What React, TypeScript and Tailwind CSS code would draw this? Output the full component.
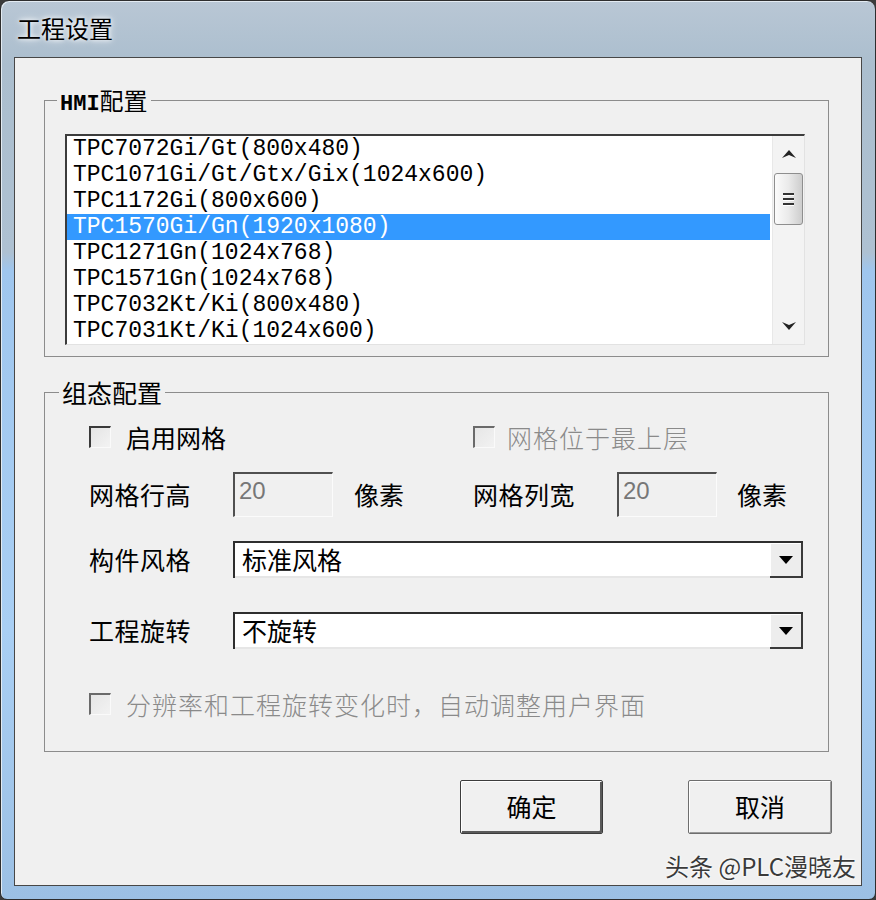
import React from "react";

const items = [
  "TPC7072Gi/Gt(800x480)",
  "TPC1071Gi/Gt/Gtx/Gix(1024x600)",
  "TPC1172Gi(800x600)",
  "TPC1570Gi/Gn(1920x1080)",
  "TPC1271Gn(1024x768)",
  "TPC1571Gn(1024x768)",
  "TPC7032Kt/Ki(800x480)",
  "TPC7031Kt/Ki(1024x600)",
];

function CheckBox({ disabled }: { disabled?: boolean }) {
  return (
    <div
      className={
        disabled
          ? "w-[22px] h-[22px] shrink-0 border-t-2 border-l-2 border-t-[#6a6a6a] border-l-[#6a6a6a] border-b border-r border-b-[#fafafa] border-r-[#fafafa] bg-[linear-gradient(135deg,#e6e6e6,#f2f2f2)]"
          : "w-[22px] h-[22px] shrink-0 border-t-2 border-l-2 border-t-[#3a3a3a] border-l-[#3a3a3a] border-b border-r border-b-[#fafafa] border-r-[#fafafa] bg-[linear-gradient(135deg,#e4e4e4,#f3f3f3)]"
      }
    />
  );
}

function NumBox() {
  return (
    <div className="w-[100px] h-[45px] shrink-0 border-t-2 border-l-2 border-t-[#505050] border-l-[#505050] border-b border-r border-b-[#fbfbfb] border-r-[#fbfbfb] bg-[#f0f0f0] pl-[4px] pt-[2px] [font-family:'Liberation_Sans',sans-serif] text-[24px] leading-[30px] text-[#777]">
      20
    </div>
  );
}

function Combo({ text }: { text: string }) {
  return (
    <div className="w-[570px] h-[37px] flex border-t-2 border-l-2 border-t-[#2e2e2e] border-l-[#2e2e2e] bg-white">
      <div className="flex-1 border-b-2 border-b-[#e6e6e6] pl-[7px] text-[25px] leading-[33px] text-black">
        {text}
      </div>
      <div className="w-[33px] flex items-center justify-center bg-[#ededed] border-r-2 border-b-2 border-r-[#3a3a3a] border-b-[#3a3a3a] shadow-[inset_1px_1px_0_#fff]">
        <svg width="16" height="10" viewBox="0 0 16 10">
          <polygon points="1,1 15,1 8,9" fill="#000" />
        </svg>
      </div>
    </div>
  );
}

export default function App() {
  return (
    <div className="w-[876px] h-[900px] bg-[#3b3b3b] [font-family:'Noto_Sans_CJK_SC','Noto_Sans',sans-serif]">
      <div className="flex h-full flex-col rounded-t-[9px] rounded-b-[7px] border border-[#2e2e2e] bg-[linear-gradient(180deg,#b9c7d5_0%,#abbece_7%,#aec1d2_28%,#9fc6ee_30%,#a9cff4_70%,#9cc0e4_100%)] shadow-[inset_1px_1px_0_#e3ebf2]">
        <div className="h-[56px] flex items-center pl-[16px] pb-[2px] text-[24px] text-black [text-shadow:0_0_8px_#fff,0_0_4px_#fff]">
          工程设置
        </div>
        <div className="relative mx-[13px] mb-[13px] flex-1 flex flex-col border border-[#474747] bg-[#f0f0f0]">
          {/* HMI group */}
          <fieldset className="ml-[29px] mr-[32px] mt-[28px] border border-[#8c8c8c]">
            <legend className="ml-[12px] px-[3px] h-[28px] text-[24px] leading-[28px] text-black">
              <span className="[font-family:'Liberation_Mono',monospace] font-bold text-[22px]">HMI</span>配置
            </legend>
            <div className="pt-[20px] pl-[20px] pr-[23px] pb-[11px]">
              <div className="h-[211px] flex border-t-2 border-l-2 border-t-[#3c3c3c] border-l-[#3c3c3c] border-b border-r border-b-[#e2e2e2] border-r-[#e2e2e2] bg-white">
                <div className="flex-1 pr-[2px] [font-family:'Liberation_Mono',monospace] text-[23px]">
                  {items.map((t, i) => (
                    <div
                      key={t}
                      className={
                        i === 3
                          ? "h-[26px] leading-[26px] pl-[6px] bg-[#3399ff] text-white whitespace-nowrap"
                          : "h-[26px] leading-[26px] pl-[6px] text-black whitespace-nowrap"
                      }
                    >
                      {t}
                    </div>
                  ))}
                </div>
                <div className="w-[32px] flex flex-col items-center bg-[#f3f3f3] border-l border-l-[#e8e8e8]">
                  <div className="h-[36px] w-full flex items-center justify-center">
                    <svg width="14" height="8" viewBox="0 0 14 8">
                      <polygon points="0,8 7,0 14,8 7,5" fill="#222" />
                    </svg>
                  </div>
                  <div className="mt-[1px] w-[29px] h-[52px] rounded-[3px] border border-[#8e8e8e] bg-[linear-gradient(90deg,#fbfbfb_0%,#eaeaea_50%,#cdcdcd_100%)] flex flex-col items-center justify-center gap-[3px]">
                    <div className="w-[11px] h-[2px] bg-[#333] shadow-[0_1px_0_#fff]" />
                    <div className="w-[11px] h-[2px] bg-[#333] shadow-[0_1px_0_#fff]" />
                    <div className="w-[11px] h-[2px] bg-[#333] shadow-[0_1px_0_#fff]" />
                  </div>
                  <div className="flex-1" />
                  <div className="h-[36px] w-full flex items-center justify-center">
                    <svg width="14" height="8" viewBox="0 0 14 8">
                      <polygon points="0,0 7,8 14,0 7,3" fill="#222" />
                    </svg>
                  </div>
                </div>
              </div>
            </div>
          </fieldset>

          {/* Config group */}
          <fieldset className="ml-[29px] mr-[32px] mt-[21px] border border-[#8c8c8c]">
            <legend className="ml-[14px] px-[3px] h-[28px] text-[25px] leading-[28px] text-black">组态配置</legend>
            <div className="pt-[16px] pl-[44px] pb-[32px] text-[25px] text-black">
              <div className="h-[30px] flex items-center">
                <div className="w-[384px] flex items-center gap-[15px]">
                  <CheckBox />
                  <span className="leading-[30px]">启用网格</span>
                </div>
                <div className="flex items-center gap-[12px]">
                  <CheckBox disabled />
                  <span className="leading-[30px] text-[#8a8a8a] font-light tracking-[1px]">网格位于最上层</span>
                </div>
              </div>

              <div className="mt-[20px] h-[45px] flex items-center">
                <div className="w-[384px] flex items-center">
                  <span className="w-[144px] tracking-[0.5px]">网格行高</span>
                  <NumBox />
                  <span className="ml-[21px]">像素</span>
                </div>
                <div className="flex items-center">
                  <span className="w-[144px] tracking-[0.5px]">网格列宽</span>
                  <NumBox />
                  <span className="ml-[20px]">像素</span>
                </div>
              </div>

              <div className="mt-[24px] h-[37px] flex items-center">
                <span className="w-[144px] tracking-[0.5px]">构件风格</span>
                <Combo text="标准风格" />
              </div>

              <div className="mt-[34px] h-[37px] flex items-center">
                <span className="w-[144px] tracking-[0.5px]">工程旋转</span>
                <Combo text="不旋转" />
              </div>

              <div className="mt-[40px] h-[30px] flex items-center gap-[15px]">
                <CheckBox disabled />
                <span className="leading-[30px] text-[#8a8a8a] font-light tracking-[1px]">
                  分辨率和工程旋转变化时，自动调整用户界面
                </span>
              </div>
            </div>
          </fieldset>

          {/* Buttons */}
          <div className="mt-[28px] flex justify-end gap-[85px] pr-[29px]">
            <button className="w-[143px] h-[54px] rounded-[2px] border border-[#3c3c3c] bg-[#f0f0f0] shadow-[inset_1px_1px_0_#fff,inset_-2px_-2px_0_#5a5a5a] text-[25px] text-black">
              确定
            </button>
            <button className="w-[144px] h-[54px] rounded-[2px] border border-[#6e6e6e] bg-[#f0f0f0] shadow-[inset_1px_1px_0_#fff,inset_-1px_-1px_0_#9a9a9a] text-[25px] text-black">
              取消
            </button>
          </div>

          <div className="absolute right-[5px] bottom-[4px] text-[24px] leading-[30px] text-[#3a3a3a] [text-shadow:0_0_3px_#fff,0_0_2px_#fff]">
            头条 @PLC漫晓友
          </div>
        </div>
      </div>
    </div>
  );
}
